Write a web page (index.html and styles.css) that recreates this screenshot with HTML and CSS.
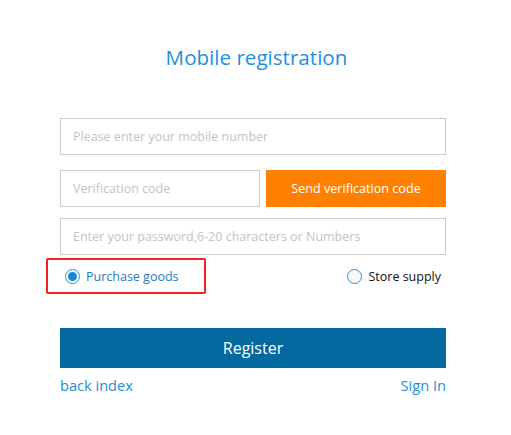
FILE: index.html
```html
<!DOCTYPE html>
<html>
<head>
<meta charset="utf-8">
<link rel="stylesheet" href="styles.css">
</head>
<body>
<div class="page">
  <h1 class="title">Mobile registration</h1>
  <form class="form">
    <input class="field" type="text" placeholder="Please enter your mobile number">
    <div class="code-row">
      <input class="field code" type="text" placeholder="Verification code">
      <button type="button" class="send">Send verification code</button>
    </div>
    <input class="field pwd" type="password" placeholder="Enter your password,6-20 characters or Numbers">
    <div class="roles">
      <label class="role role-active"><span class="radio checked"></span><span class="role-text">Purchase goods</span></label>
      <label class="role"><span class="radio"></span><span class="role-text dark">Store supply</span></label>
    </div>
    <button type="button" class="register">Register</button>
    <div class="links">
      <a class="link" href="#">back index</a>
      <a class="link" href="#">Sign In</a>
    </div>
  </form>
</div>
</body>
</html>
```
FILE: styles.css
```css
html, body {
  margin: 0;
  padding: 0;
  background: #fff;
}
body {
  font-family: "Open Sans", "Noto Sans", sans-serif;
}
.page {
  width: 511px;
  padding-top: 42px;
}
.title {
  margin: 0;
  text-align: center;
  font-size: 20.6px;
  font-weight: 400;
  line-height: 30px;
  color: #1e8fe0;
  padding-left: 2px;
}
.form {
  width: 386px;
  margin: 46px 0 0 60px;
  display: flex;
  flex-direction: column;
}
.field {
  box-sizing: border-box;
  height: 37px;
  width: 386px;
  border: 1px solid #cccccc;
  padding: 0 12px;
  font-family: inherit;
  font-size: 12.5px;
  outline: none;
  margin: 0;
}
.field::placeholder {
  color: #c4c4c4;
}
.code-row {
  display: flex;
  gap: 6px;
  margin-top: 15px;
}
.field.code {
  width: 200px;
}
.send {
  flex: 1;
  height: 37px;
  border: 0;
  margin: 0;
  background: #ff7f00;
  color: #fff;
  font-family: inherit;
  font-size: 12.6px;
}
.pwd {
  margin-top: 11px;
}
.roles {
  display: flex;
  justify-content: space-between;
  align-items: center;
  margin-top: 3px;
  margin-left: -14px;
}
.role {
  display: flex;
  align-items: center;
  gap: 6px;
  font-size: 12.5px;
  height: 36px;
  box-sizing: border-box;
  padding: 0 3px 0 4px;
  border: 2px solid transparent;
  border-radius: 2px;
}
.role-active {
  width: 160px;
  padding-left: 17px;
  border-color: #f41f1f;
}
.radio {
  box-sizing: border-box;
  width: 15px;
  height: 15px;
  border-radius: 50%;
  border: 1px solid #2a8fd6;
  background: #f6f9fc;
  display: flex;
  align-items: center;
  justify-content: center;
}
.radio.checked {
  border-color: #2a8fd6;
  background: #fff;
}
.radio.checked::after {
  content: "";
  width: 9px;
  height: 9px;
  border-radius: 50%;
  background: #1a86d8;
}
.role-text {
  color: #1c7cc8;
}
.role-text.dark {
  color: #111;
}
.register {
  margin-top: 34px;
  height: 40px;
  border: 0;
  background: #03699f;
  color: #fff;
  font-family: inherit;
  font-size: 16px;
}
.links {
  display: flex;
  justify-content: space-between;
  margin-top: 6px;
}
.link {
  color: #1e8fd6;
  text-decoration: none;
  font-size: 14.6px;
  line-height: 22px;
}
```
